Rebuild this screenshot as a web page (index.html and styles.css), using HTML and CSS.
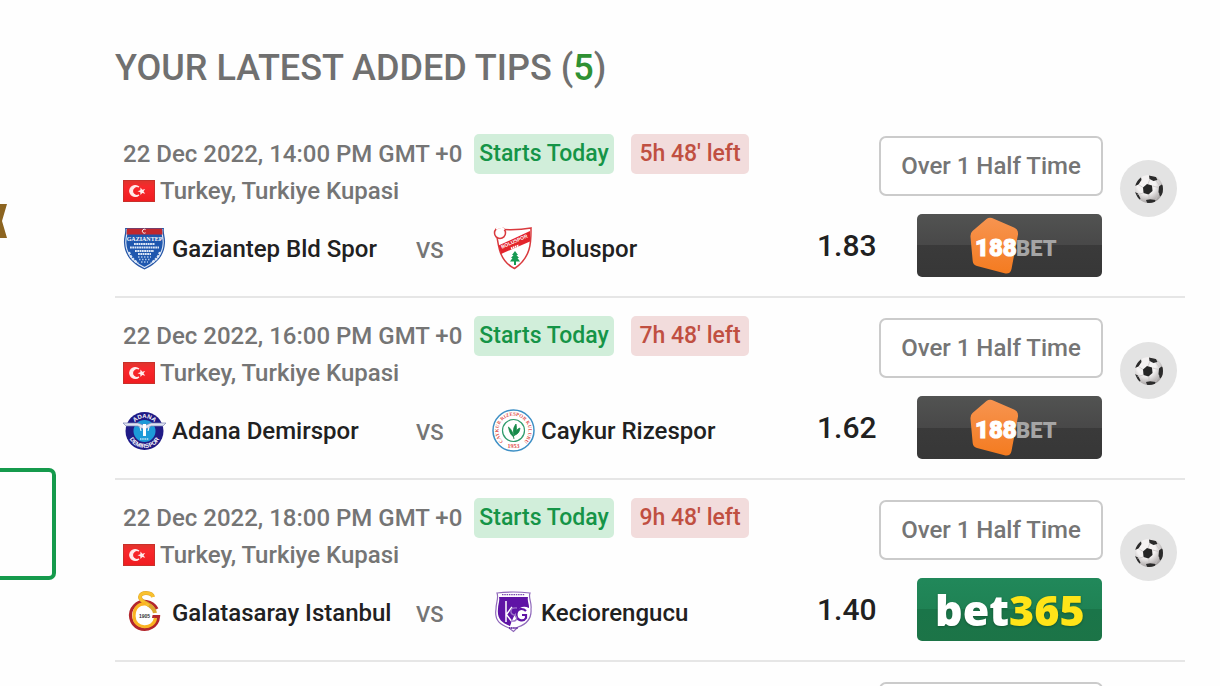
FILE: index.html
```html
<!DOCTYPE html>
<html lang="en">
<head>
  <meta charset="UTF-8" />
  <meta name="viewport" content="width=device-width, initial-scale=1.0" />
  <title>Your latest added tips</title>
  <link rel="stylesheet" href="styles.css">
</head>
<body>
  <!-- shared icons -->
  <svg class="sprite" aria-hidden="true">
    <defs>
      <linearGradient id="flagRed" x1="0" y1="0" x2="0" y2="1">
        <stop offset="0" stop-color="#e0342c" />
        <stop offset="0.3" stop-color="#f8282c" />
        <stop offset="1" stop-color="#f01c20" />
      </linearGradient>
      <linearGradient id="orange" x1="0" y1="0" x2="0" y2="1">
        <stop offset="0" stop-color="#f79450" />
        <stop offset="1" stop-color="#f47b20" />
      </linearGradient>
      <radialGradient id="ballShade" cx="0.4" cy="0.35" r="0.65">
        <stop offset="0.5" stop-color="#f4f2f2" />
        <stop offset="1" stop-color="#a8a4a4" />
      </radialGradient>
      <clipPath id="ballClip"><circle cx="15" cy="15" r="14" /></clipPath>
    </defs>
    <symbol id="flag-tr" viewBox="0 0 32 22">
      <rect width="32" height="22" fill="#c9302a" />
      <rect x="1" y="1" width="30" height="20" fill="url(#flagRed)" />
      <path d="M16 7a5.500 5.500 0 1 0 0 8a4.500 4.500 0 1 1 0-8z" fill="#ffecec" stroke="#ffecec" stroke-width="1.200" />
      <path d="M14.500 11.200l2.800-.9.200-2.800 1.800 2.200 2.900-.8-1.700 2.400 1.700 2.400-2.900-.8-1.800 2.200-.2-2.800z" fill="#ffecec" />
    </symbol>
    <symbol id="ball" viewBox="0 0 30 30">
      <circle cx="15" cy="15" r="14" fill="url(#ballShade)" />
      <g clip-path="url(#ballClip)">
        <path d="M9 13.500l4-3.500 5 1.500.5 5.500-4 3.500-5-1.500z" fill="#262626" />
        <path d="M15 1.500l7 1.500 1.500 3-4 1-4-2zM2 6l5-3 .5 3-3 4.500L1 12zM25 12.500l2.500-2 3 2v7l-4.500 3-1.500-4.500zM1 18l3 1.500 2.500 5-1 2-5-4zM12 26l4-.8 5.500.8-1 4h-7z" fill="#2b2b2b" />
        <path d="M14 10l2-5M18.600 12l6 1.500M15 20.200v5M9.500 19l-6 1.500M9 13.500l-4.500-3M22 6.500l3.500 5M25 19l-3.500 7" stroke="#c4c0c0" stroke-width="0.700" fill="none" />
      </g>
    </symbol>
  </svg>

  <div class="page">
    <aside class="side">
      <svg class="ribbon" viewBox="0 0 7 34" aria-hidden="true"><path d="M0 0h7L2 17l5 17H0z" fill="#8c6420" /></svg>
      <div class="side-box"></div>
    </aside>

    <main class="tips">
      <h1>YOUR LATEST ADDED TIPS (<span>5</span>)</h1>

      <article class="tip">
        <div class="info">
          <div class="when">
            <time>22 Dec 2022, 14:00 PM GMT +0</time>
            <span class="badge today">Starts Today</span>
            <span class="badge left">5h 48' left</span>
          </div>
          <div class="league"><svg class="flag"><use href="#flag-tr" /></svg>Turkey, Turkiye Kupasi</div>
          <div class="teams">
            <div class="team">
              <svg class="crest" viewBox="0 0 43 43">
                <path d="M2 1h39c-1 5 1.500 9 1 15-.5 12-8 21-20.500 26.500C9 37 1.500 28 1 16 .5 10 3 6 2 1z" fill="#2858a8" />
                <path d="M4 2.500h35c-.6 4 1.500 8 1.200 13.500C39.700 27 33 35 21.500 40.500 10 35 3.300 27 2.800 16 2.500 10.500 4.600 6.500 4 2.500z" fill="#1f57ae" stroke="#dbe7f8" stroke-width="1.100" />
                <path d="M4 1.500h35l.5 6H3.500z" fill="#c1272d" />
                <path d="M22.600 2.600a2 2 0 1 0 0 3.200" fill="none" stroke="#fff" stroke-width="0.900" />
                <text class="crest-serif" x="21.500" y="13.500" font-size="6" fill="#fff">GAZIANTEP</text>
                <path d="M11 17h21M7 20.500h29M12 24h19M15 27h13" stroke="#dfe9f7" stroke-width="2" stroke-dasharray="1.800 .5" />
                <path d="M15 30h13M16 32.500h11M18 35h7" stroke="#aac5ea" stroke-width="1.500" stroke-dasharray="1.500 1.500" />
                <path d="M6 25c1 4 4 8 9 11M37 25c-1 4-4 8-9 11" fill="none" stroke="#dfe9f7" stroke-width="2.300" stroke-dasharray="2.500 1" />
              </svg>
              Gaziantep Bld Spor
            </div>
            <div class="vs">VS</div>
            <div class="team">
              <svg class="crest" viewBox="0 0 43 43">
                <path d="M4 2c11 1 24 1 35-1 0 12 1 29-16.500 40.500C7 34 6 18 4 2z" fill="#fff" stroke="#d93a3e" stroke-width="1.500" />
                <path d="M38 4v10.500L9 27 6.500 18.500z" fill="#e3242b" />
                <text class="crest-text" x="23" y="16" font-size="5" fill="#fff" transform="rotate(-24 23 16)">BOLUSPOR</text>
                <path d="M19 21.500l8-3.200" stroke="#fff" stroke-width="2" stroke-dasharray="1.500 .6" />
                <circle cx="8" cy="6" r="5.500" fill="#fff" stroke="#d93a3e" stroke-width="1.500" />
                <path d="M4 2a5 5 0 0 1 8 1" fill="none" stroke="#fff" stroke-width="2" />
                <path d="M23 24l3 4h-1.500l2.500 3h-1.500l2.500 3.500h-4V38h-2v-3.500h-4l2.500-3.500H19l2.500-3H20z" fill="#179a52" />
              </svg>
              Boluspor
            </div>
          </div>
        </div>
        <div class="pick">
          <button class="market" type="button">Over 1 Half Time</button>
          <div class="bet">
            <span class="odds">1.83</span>
            <a class="bookie dark" href="#" aria-label="188BET">
              <svg viewBox="0 0 185 63">
                <path d="M69.500 5Q72 3 75 4l22 9.500q4.500 2 4 7L94.500 55q-1 5-6 4.500L60 52q-4-1-4.300-5L53.500 23q-.3-4 2-6z" fill="url(#orange)" />
                <text class="logo-188" x="58" y="42">188</text>
                <text class="logo-bet" x="99" y="42">BET</text>
              </svg>
            </a>
          </div>
        </div>
        <div class="sport"><svg><use href="#ball" /></svg></div>
      </article>

      <article class="tip">
        <div class="info">
          <div class="when">
            <time>22 Dec 2022, 16:00 PM GMT +0</time>
            <span class="badge today">Starts Today</span>
            <span class="badge left">7h 48' left</span>
          </div>
          <div class="league"><svg class="flag"><use href="#flag-tr" /></svg>Turkey, Turkiye Kupasi</div>
          <div class="teams">
            <div class="team">
              <svg class="crest" viewBox="0 0 43 43">
                <circle cx="21.500" cy="22" r="19" fill="#201b86" />
                <circle cx="21.500" cy="22" r="11" fill="#1c9ad8" />
                <path id="adanaTop" d="M8.500 22a13 13 0 0 1 26 0" fill="none" />
                <text class="crest-text" font-size="6" fill="#fff"><textPath href="#adanaTop" startOffset="50%">ADANA</textPath></text>
                <path id="adanaLow" d="M4.500 22a17 17 0 0 0 34 0" fill="none" />
                <text class="crest-text" font-size="6" fill="#fff"><textPath href="#adanaLow" startOffset="50%">DEMIRSPOR</textPath></text>
                <path d="M0 14h15l5 2h3l5-2h15l-3 3H28l-4 2.500h-5L15 17H3z" fill="#dfe4f1" stroke="#7b83b5" stroke-width="0.700" />
                <path d="M21.500 15v12" stroke="#fff" stroke-width="3" />
                <path d="M17 18l1 4M26 18l-1 4" stroke="#fff" stroke-width="1" />
                <path d="M17 30h9" stroke="#bfe4f6" stroke-width="1.500" stroke-dasharray="1.500 .7" />
              </svg>
              Adana Demirspor
            </div>
            <div class="vs">VS</div>
            <div class="team">
              <svg class="crest" viewBox="0 0 43 43">
                <circle cx="21.500" cy="21.500" r="20.500" fill="#fff" stroke="#3d8fc5" stroke-width="1.500" />
                <circle cx="21.500" cy="21.500" r="11" fill="#fff" stroke="#2f9b6c" stroke-width="1.200" />
                <path id="rizeTop" d="M13 34a15 15 0 1 1 17 0" fill="none" />
                <text class="crest-serif" font-size="5" fill="#e0524c"><textPath href="#rizeTop" startOffset="50%">CAYKUR RIZESPOR KULUBU</textPath></text>
                <text class="crest-serif" x="21.500" y="39" font-size="6" fill="#e0524c">1953</text>
                <path d="M22 30c-1-6-2-9-5.500-12 1 5 2 8 5.500 10M22 27c-1-5-1-8 2-12 1 5 .5 8-2 12M23 26c.5-4 2-6 5-7-.5 4-2 6-5 7" fill="#178a4a" stroke="#178a4a" stroke-width="0.800" />
              </svg>
              Caykur Rizespor
            </div>
          </div>
        </div>
        <div class="pick">
          <button class="market" type="button">Over 1 Half Time</button>
          <div class="bet">
            <span class="odds">1.62</span>
            <a class="bookie dark" href="#" aria-label="188BET">
              <svg viewBox="0 0 185 63">
                <path d="M69.500 5Q72 3 75 4l22 9.500q4.500 2 4 7L94.500 55q-1 5-6 4.500L60 52q-4-1-4.300-5L53.500 23q-.3-4 2-6z" fill="url(#orange)" />
                <text class="logo-188" x="58" y="42">188</text>
                <text class="logo-bet" x="99" y="42">BET</text>
              </svg>
            </a>
          </div>
        </div>
        <div class="sport"><svg><use href="#ball" /></svg></div>
      </article>

      <article class="tip">
        <div class="info">
          <div class="when">
            <time>22 Dec 2022, 18:00 PM GMT +0</time>
            <span class="badge today">Starts Today</span>
            <span class="badge left">9h 48' left</span>
          </div>
          <div class="league"><svg class="flag"><use href="#flag-tr" /></svg>Turkey, Turkiye Kupasi</div>
          <div class="teams">
            <div class="team">
              <svg class="crest" viewBox="0 0 43 43">
                <path d="M34 18a14 14 0 1 0 1.500 7.500H27" fill="none" stroke="#b3262c" stroke-width="3.200" />
                <path d="M30 6c-1-5-13-5.500-13 0 0 6 14 7 15 16" fill="none" stroke="#dba62f" stroke-width="4" />
                <path d="M30 6c-1-5-13-5.500-13 0 0 4 5 6 9 8.500" fill="none" stroke="#f9c12e" stroke-width="3" />
                <path d="M23 13c-7-1-12 4-12 12 0 14 20 14 21.500 2" fill="none" stroke="#fab322" stroke-width="3.200" />
                <circle cx="21.500" cy="24.500" r="8" fill="#fff" />
                <text class="crest-text" x="21.500" y="26.500" font-size="5" fill="#333">1905</text>
              </svg>
              Galatasaray Istanbul
            </div>
            <div class="vs">VS</div>
            <div class="team">
              <svg class="crest" viewBox="0 0 43 43">
                <path d="M5 2q16-2 33 0c-2 5 2 9 1 16 1 12-7 16-13 18l-4.500 4.500L17 37C9 34 2 30 4 18c0-7 3-11 1-16z" fill="#fff" stroke="#9069bb" stroke-width="1.200" />
                <path d="M7 6h29c-1 4 1.500 8 1 11-9-4-13 2-19 18C9 32 5 27 6 18c0-5 2-8 1-12z" fill="#5f14a5" />
                <path d="M10 3.700h23" stroke="#7a48ae" stroke-width="1.300" stroke-dasharray="1.500 .8" />
                <path d="M14 10v21M14 24l6-8M14 23l7 9" stroke="#fff" stroke-width="1.500" />
                <path d="M34 20c-3-3-9-3-9.500 3-.5 7 7 8 9.500 4v-3h-4" fill="none" stroke="#5f14a5" stroke-width="2.200" />
                <path d="M25 17c-8-1-7 6-3 7s4 7-3 6" fill="none" stroke="#9b73c8" stroke-width="1.300" />
                <path d="M17 37h9" stroke="#6c35a4" stroke-width="2" stroke-dasharray="1.500 .6" />
              </svg>
              Keciorengucu
            </div>
          </div>
        </div>
        <div class="pick">
          <button class="market" type="button">Over 1 Half Time</button>
          <div class="bet">
            <span class="odds">1.40</span>
            <a class="bookie green" href="#" aria-label="bet365">
              <svg viewBox="0 0 185 63">
                <text class="logo-365" x="18" y="48">bet<tspan class="yellow">365</tspan></text>
              </svg>
            </a>
          </div>
        </div>
        <div class="sport"><svg><use href="#ball" /></svg></div>
      </article>

      <article class="tip">
        <div class="info"></div>
        <div class="pick next">
          <button class="market" type="button" aria-label="Next tip"></button>
        </div>
      </article>
    </main>
  </div>
</body>
</html>
```
FILE: styles.css
```css
* {
  box-sizing: border-box;
}
body {
  margin: 0;
  height: 100vh;
  overflow: hidden;
  background: #fefefe;
  color: #757575;
  font-family: Roboto, "Liberation Sans", sans-serif;
  font-size: 24px;
  font-weight: 500;
}
svg {
  display: block;
  flex: none;
}
.sprite {
  position: absolute;
  width: 0;
  height: 0;
}
.page {
  display: flex;
}

/* left column */
.side {
  flex: none;
  width: 56px;
  padding-top: 204px;
}
.ribbon {
  width: 7px;
  height: 34px;
}
.side-box {
  height: 112px;
  margin-top: 230px;
  border: 4px solid #159a4c;
  border-left: none;
  border-radius: 0 7px 7px 0;
}

/* tips list */
.tips {
  flex: 1;
  min-width: 0;
  padding: 44px 35px 0 59px;
}
h1 {
  margin: 0 0 24px;
  font-size: 36px;
  font-weight: 500;
  line-height: 48px;
  color: #707070;
}
h1 span {
  color: #2f9133;
}
.tip {
  display: flex;
  gap: 17px;
  padding: 18px 8px 19px;
  border-bottom: 2px solid #e6e6e6;
}
.info {
  flex: 1;
  min-width: 0;
}
.when {
  display: flex;
  align-items: center;
  line-height: 40px;
  white-space: nowrap;
}
.when time {
  min-width: 345px;
}
.badge {
  border-radius: 5px;
  font-size: 23px;
  text-align: center;
}
.today {
  width: 140px;
  margin: 0 17px 0 6px;
  background: #d1eeda;
  color: #159447;
}
.left {
  width: 118px;
  background: #f2dcdc;
  color: #c04f41;
}
.league {
  display: flex;
  align-items: center;
  gap: 5px;
  line-height: 34px;
}
.flag {
  width: 32px;
  height: 22px;
}
.teams {
  display: grid;
  grid-template-columns: 293px 76px 1fr;
  align-items: center;
  margin-top: 19px;
}
.team {
  display: flex;
  align-items: center;
  gap: 6px;
  color: #212121;
  white-space: nowrap;
}
.crest {
  width: 43px;
  height: 43px;
}
.vs {
  padding-top: 4px;
  font-size: 22px;
}
.pick {
  flex: none;
  width: 286px;
  padding-top: 2px;
}
.market {
  display: block;
  width: 224px;
  height: 60px;
  margin: 0 0 18px auto;
  padding: 0;
  border: 2px solid #cbcbcb;
  border-radius: 7px;
  background: #fff;
  color: #757575;
  font: inherit;
}
.bet {
  display: flex;
  align-items: center;
  justify-content: space-between;
  height: 63px;
}
.odds {
  color: #212121;
  font-size: 30px;
}
.bookie {
  width: 185px;
  height: 63px;
  margin-right: 1px;
  border-radius: 5px;
}
.bookie svg {
  width: 100%;
  height: 100%;
}
.dark {
  background: linear-gradient(#525352, #484848 50%, #3a3a3a 50%, #373737);
}
.green {
  background: linear-gradient(#21885a, #1f8254 50%, #1a7549 50%, #1c7447);
}
.sport {
  display: flex;
  flex: none;
  align-items: center;
  justify-content: center;
  width: 57px;
  height: 57px;
  margin-top: 26px;
  border-radius: 50%;
  background: #e3e3e3;
}
.sport svg {
  width: 30px;
  height: 30px;
}
.next {
  margin-right: 74px;
}

/* lettering inside the logos */
.logo-188 {
  font: 900 24px Roboto, sans-serif;
  fill: #fff;
  stroke: #fff;
  stroke-width: 1px;
}
.logo-bet {
  font: 900 22px Roboto, sans-serif;
  fill: #a5a5a5;
}
.logo-365 {
  font: 800 43px "Open Sans", sans-serif;
  fill: #fff;
  filter: drop-shadow(0 1px 1px #125633);
}
.yellow {
  fill: #ffe418;
}
.crest-text {
  font-family: "Liberation Sans", sans-serif;
  font-weight: 700;
  text-anchor: middle;
}
.crest-serif {
  font-family: "Liberation Serif", serif;
  font-weight: 700;
  text-anchor: middle;
}
```
